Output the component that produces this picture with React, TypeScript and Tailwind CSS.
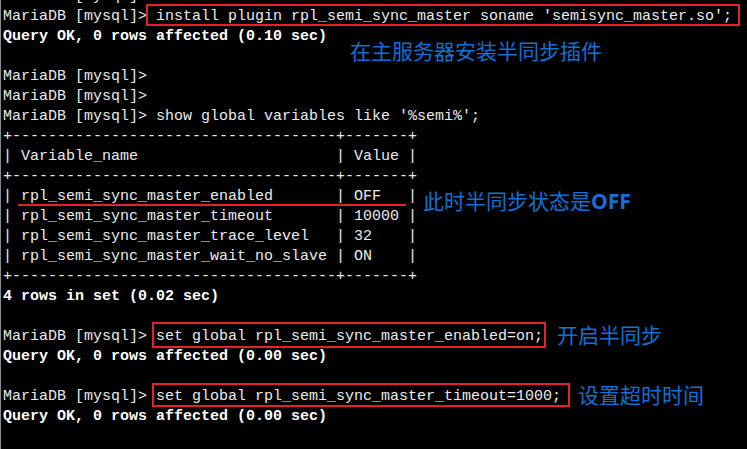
const rows: [string, string][] = [
  ["rpl_semi_sync_master_enabled", "OFF"],
  ["rpl_semi_sync_master_timeout", "10000"],
  ["rpl_semi_sync_master_trace_level", "32"],
  ["rpl_semi_sync_master_wait_no_slave", "ON"],
];

const border = "+" + "-".repeat(36) + "+" + "-".repeat(7) + "+";
const row = (a: string, b: string) => "| " + a.padEnd(34) + " | " + b.padEnd(5) + " |";
const prompt = "MariaDB [mysql]> ";

function Line({ children, bold }: { children?: React.ReactNode; bold?: boolean }) {
  return <div className={`h-5 whitespace-pre ${bold ? "font-bold text-white" : ""}`}>{children}</div>;
}

function Boxed({ text, box }: { text: string; box: string }) {
  return (
    <span className="relative">
      {text}
      <span className={`absolute border-2 border-[#e3202b] ${box}`} />
    </span>
  );
}

function Note({ children, pos }: { children: React.ReactNode; pos: string }) {
  return (
    <div
      className={`absolute whitespace-nowrap text-[21px] leading-[22px] text-[#1370d6] ${pos}`}
      style={{ fontFamily: '"Noto Sans CJK SC", "Noto Sans", sans-serif' }}
    >
      {children}
    </div>
  );
}

export default function App() {
  return (
    <div className="relative w-[747px] h-[449px] overflow-hidden bg-black border-l border-[#8a8a8a]">
      <div
        className="-mt-[13px] pl-[2px] text-[15px] leading-5 text-[#ececec]"
        style={{ fontFamily: '"Liberation Mono", monospace' }}
      >
        <Line>{prompt}</Line>
        <Line>
          {prompt}
          <Boxed
            text="install plugin rpl_semi_sync_master soname 'semisync_master.so';"
            box="-left-[10px] -right-[8px] -top-[4px] -bottom-[1px]"
          />
        </Line>
        <Line bold>Query OK, 0 rows affected (0.10 sec)</Line>
        <Line />
        <Line>MariaDB [mysql]&gt;</Line>
        <Line>MariaDB [mysql]&gt;</Line>
        <Line>{prompt}show global variables like '%semi%';</Line>
        <Line>{border}</Line>
        <Line>{row("Variable_name", "Value")}</Line>
        <Line>{border}</Line>
        {rows.map(([a, b]) => (
          <Line key={a}>{row(a, b)}</Line>
        ))}
        <Line>{border}</Line>
        <Line bold>4 rows in set (0.02 sec)</Line>
        <Line />
        <Line>
          {prompt}
          <Boxed
            text="set global rpl_semi_sync_master_enabled=on;"
            box="-left-[4px] -right-[3px] -top-[6px] -bottom-[3px]"
          />
        </Line>
        <Line bold>Query OK, 0 rows affected (0.00 sec)</Line>
        <Line />
        <Line>
          {prompt}
          <Boxed
            text="set global rpl_semi_sync_master_timeout=1000;"
            box="-left-[4px] -right-[9px] -top-[5px] -bottom-[2px]"
          />
        </Line>
        <Line bold>Query OK, 0 rows affected (0.00 sec)</Line>
      </div>

      {/* red underline under the enabled row */}
      <div className="absolute left-[17px] top-[204px] w-[388px] h-[2px] bg-[#e3202b]" />

      <Note pos="left-[349px] top-[39px]">在主服务器安装半同步插件</Note>
      <Note pos="left-[422px] top-[189px]">
        此时半同步状态是<span className="font-bold" style={{ fontFamily: '"Open Sans", sans-serif' }}>OFF</span>
      </Note>
      <Note pos="left-[556px] top-[323px]">开启半同步</Note>
      <Note pos="left-[577px] top-[383px]">设置超时时间</Note>
    </div>
  );
}
